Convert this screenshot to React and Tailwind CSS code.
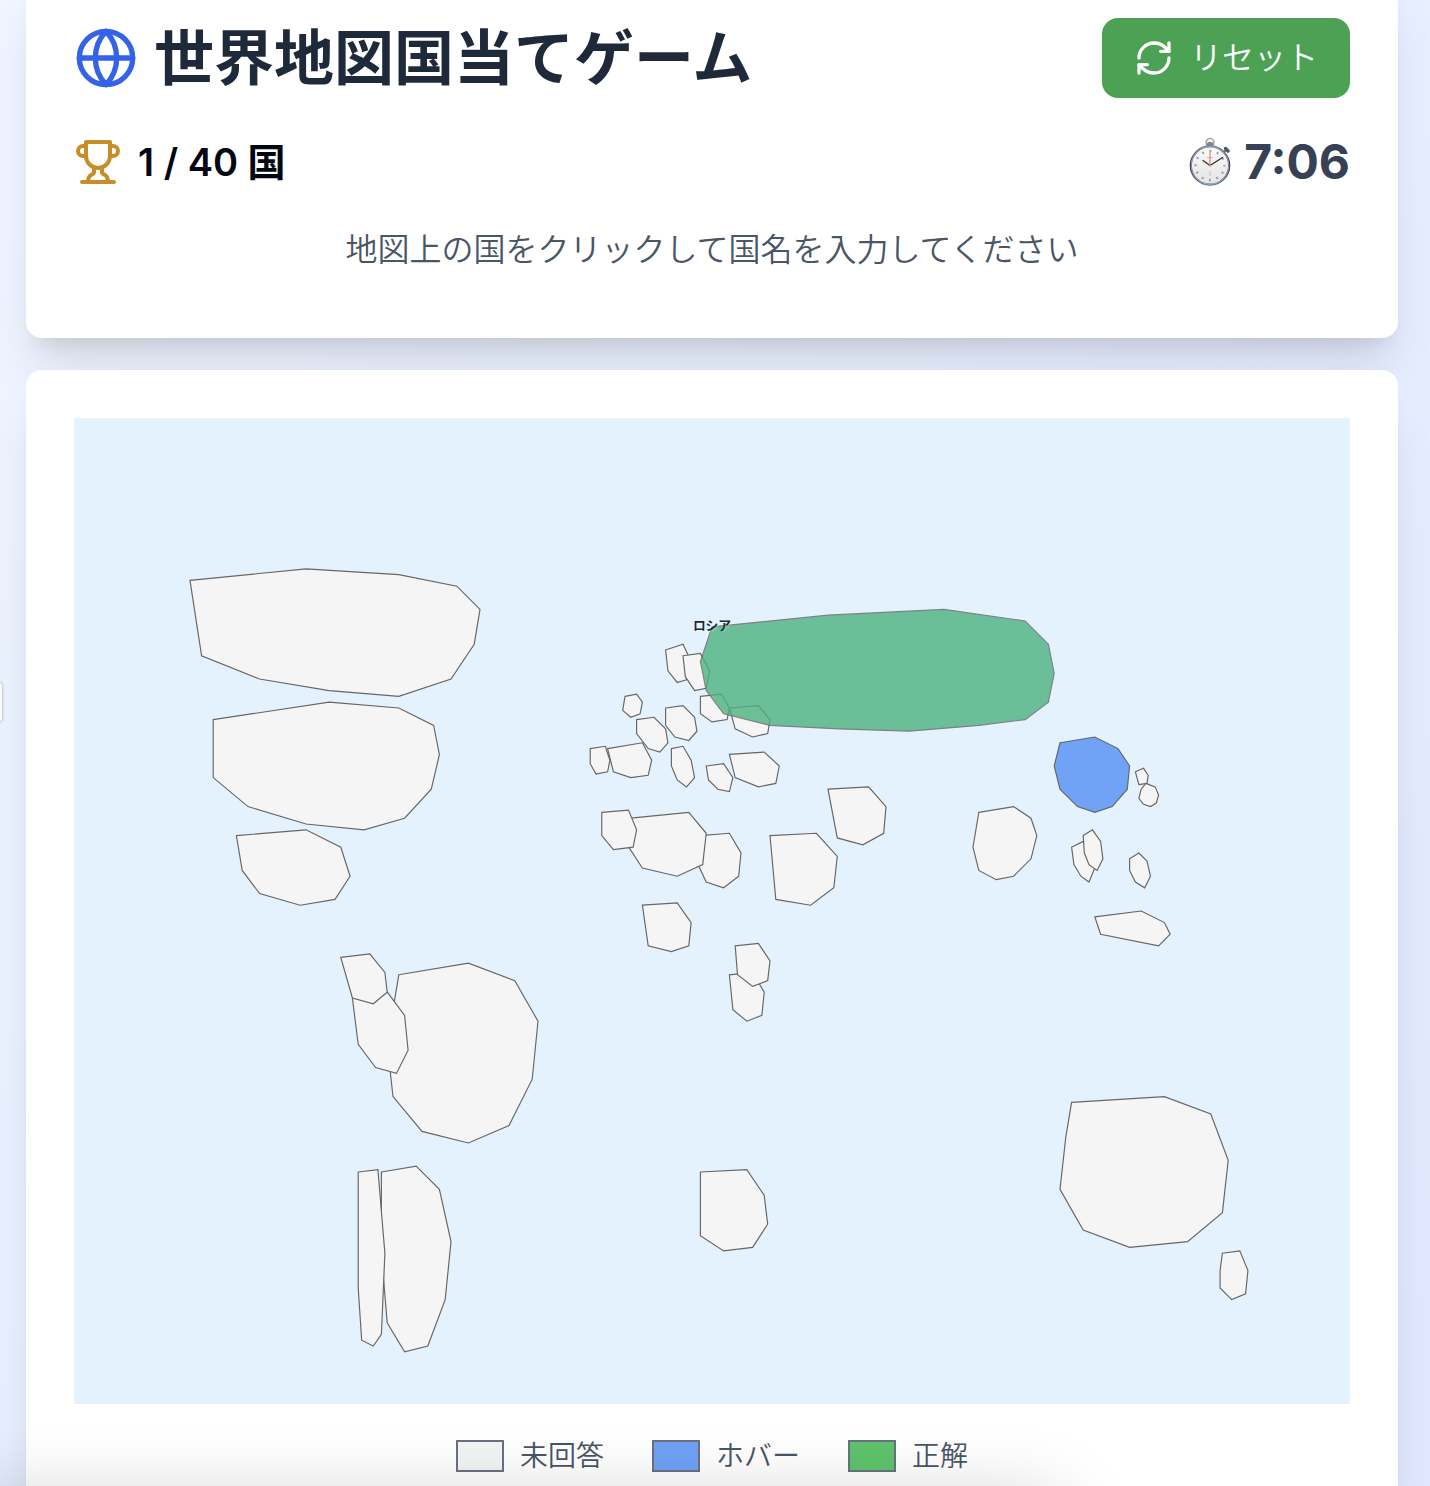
import React, { useState } from "react";
import { Globe, RefreshCw } from "lucide-react";

// Later entries are drawn over earlier ones
const COUNTRIES = [
  { id: "CA", name: "カナダ", points: "100,140 200,130 280,135 330,145 350,165 345,195 325,225 280,240 220,235 160,225 110,205" },
  { id: "US", name: "アメリカ", points: "120,260 220,245 280,250 310,265 315,290 308,320 285,345 250,355 200,350 150,335 120,310" },
  { id: "MX", name: "メキシコ", points: "140,360 200,355 230,370 238,395 225,415 195,420 160,410 145,390" },
  { id: "BR", name: "ブラジル", points: "280,480 340,470 380,485 400,520 395,570 375,610 340,625 300,615 275,585 270,540" },
  { id: "AR", name: "アルゼンチン", points: "265,650 295,645 315,665 325,710 320,760 305,800 285,805 270,780 265,720" },
  { id: "CL", name: "チリ", points: "245,650 262,648 268,720 265,790 258,800 248,795 245,750" },
  { id: "PE", name: "ペルー", points: "240,500 265,488 285,515 288,545 278,565 260,560 245,540" },
  { id: "CO", name: "コロンビア", points: "230,465 255,462 268,478 270,495 258,505 240,500" },
  { id: "GB", name: "イギリス", points: "475,240 485,238 490,245 488,255 480,258 473,252" },
  { id: "FR", name: "フランス", points: "485,260 500,258 510,268 512,280 505,288 495,285 485,272" },
  { id: "DE", name: "ドイツ", points: "510,250 525,248 535,258 537,270 530,278 518,275 510,265" },
  { id: "ES", name: "スペイン", points: "460,285 490,280 498,295 495,308 480,310 465,305" },
  { id: "PT", name: "ポルトガル", points: "445,285 458,283 462,295 460,305 450,307 445,298" },
  { id: "IT", name: "イタリア", points: "515,285 525,283 532,295 535,310 528,318 520,312 515,300" },
  { id: "GR", name: "ギリシャ", points: "545,300 560,298 568,310 565,322 555,320 547,312" },
  { id: "TR", name: "トルコ", points: "565,290 595,288 608,300 605,315 590,318 570,310" },
  { id: "PL", name: "ポーランド", points: "540,240 558,238 565,250 563,260 550,262 540,255" },
  { id: "UA", name: "ウクライナ", points: "565,250 590,248 600,260 598,272 585,275 570,268" },
  { id: "NO", name: "ノルウェー", points: "510,200 525,195 532,210 530,225 520,228 512,218" },
  { id: "SE", name: "スウェーデン", points: "525,205 540,203 548,218 545,233 535,235 527,223" },
  { id: "RU", name: "ロシア", label: [550, 183], points: "550,180 650,170 750,165 820,175 840,195 845,220 840,245 820,260 780,265 720,270 660,268 600,265 560,255 545,235 540,210" },
  { id: "EG", name: "エジプト", points: "540,360 565,358 575,375 573,395 560,405 545,400 538,385" },
  { id: "DZ", name: "アルジェリア", points: "480,345 530,340 545,358 542,385 520,395 490,388 475,365" },
  { id: "MA", name: "モロッコ", points: "455,340 478,338 485,355 482,370 465,372 455,360" },
  { id: "NG", name: "ナイジェリア", points: "490,420 520,418 532,435 530,455 515,460 495,455" },
  { id: "TZ", name: "タンザニア", points: "565,480 585,478 595,495 593,515 580,520 568,510" },
  { id: "KE", name: "ケニア", points: "570,455 590,453 600,468 598,485 585,490 572,480" },
  { id: "ZA", name: "南アフリカ", points: "540,650 580,648 595,670 598,695 585,715 560,718 540,705" },
  { id: "SA", name: "サウジアラビア", points: "600,360 640,358 658,378 655,405 635,420 605,415" },
  { id: "IR", name: "イラン", points: "650,320 685,318 700,335 698,358 680,368 658,362" },
  { id: "IN", name: "インド", points: "780,340 810,335 825,345 830,360 825,380 810,395 795,398 780,390 775,370" },
  { id: "CN", name: "中国", points: "850,280 880,275 900,285 910,300 908,320 895,335 880,340 865,335 850,320 845,300" },
  { id: "KR", name: "韓国", points: "915,305 922,302 926,308 925,315 918,316" },
  { id: "JP", name: "日本", points: "924,315 932,318 935,325 933,332 928,335 922,333 918,328 920,320" },
  { id: "TH", name: "タイ", points: "860,370 870,365 880,388 875,400 868,395 862,385" },
  { id: "VN", name: "ベトナム", points: "870,360 878,355 885,365 887,380 882,390 875,385 871,375" },
  { id: "PH", name: "フィリピン", points: "910,380 918,375 925,382 928,395 923,405 915,400 910,390" },
  { id: "ID", name: "インドネシア", points: "880,430 920,425 940,435 945,445 935,455 885,445" },
  { id: "AU", name: "オーストラリア", points: "860,590 940,585 980,600 995,640 990,685 960,710 910,715 870,700 850,665 855,620" },
  { id: "NZ", name: "ニュージーランド", points: "990,720 1005,718 1012,735 1010,755 998,760 988,750 988,735" },
];

const LEGEND = [
  { label: "未回答", color: "bg-[#f3f4f6]" },
  { label: "ホバー", color: "bg-[#70a2f5]" },
  { label: "正解", color: "bg-[#5fc46b]" },
];

const TrophyIcon = () => (
  <svg
    viewBox="0 0 24 24"
    className="size-12 text-[#c68e28]"
    fill="none"
    stroke="currentColor"
    strokeWidth="2"
    strokeLinecap="round"
    strokeLinejoin="round"
    aria-hidden="true"
  >
    <path d="M6 9H4.5a2.5 2.5 0 0 1 0-5H6" />
    <path d="M18 9h1.5a2.5 2.5 0 0 0 0-5H18" />
    <path d="M4 22h16" />
    <path d="M10 14.66V17c0 .55-.47.98-.97 1.21C7.85 18.75 7 20.24 7 22" />
    <path d="M14 14.66V17c0 .55.47.98.97 1.21C16.15 18.75 17 20.24 17 22" />
    <path d="M18 2H6v7a6 6 0 0 0 12 0V2Z" />
  </svg>
);

const StopwatchIcon = () => (
  <svg viewBox="0 0 44 50" className="h-[50px] w-11" aria-hidden="true">
    <defs>
      <linearGradient id="rim" x1="0" y1="0" x2="0" y2="1">
        <stop offset="0" stopColor="#6f7c8d" />
        <stop offset="0.5" stopColor="#34383f" />
        <stop offset="1" stopColor="#67758a" />
      </linearGradient>
      <linearGradient id="face" x1="0" y1="0" x2="0" y2="1">
        <stop offset="0" stopColor="#fafafa" />
        <stop offset="1" stopColor="#e4e4e4" />
      </linearGradient>
    </defs>
    <circle cx="22" cy="5.500" r="4" fill="#f3f3f3" stroke="#8d9095" strokeWidth="1.200" />
    <rect x="19" y="5" width="6" height="5" rx="1.500" fill="#7d8794" />
    <path d="M35 16l3-3" stroke="#6b7280" strokeWidth="2" />
    <path d="M37.500 11.500l2.500 2.500" stroke="#4f5763" strokeWidth="3.500" strokeLinecap="round" />
    <circle cx="22" cy="28.500" r="19.200" fill="url(#face)" stroke="url(#rim)" strokeWidth="2.200" />
    <circle cx="22" cy="28.500" r="18.800" fill="none" stroke="#b9c6d8" strokeWidth="0.700" />
    <circle cx="22" cy="28.500" r="14.500" fill="none" stroke="#a3a3a3" strokeWidth="2.400" strokeDasharray="2 5.590" strokeDashoffset="1" />
    <path d="M19 20.500h6M22 34v5" stroke="#c4c4c4" strokeWidth="1" />
    <path d="M22 29V14.500" stroke="#e2896c" strokeWidth="1.200" />
    <path d="M22 28.500l12.500-8M22 28.500l-7-5" stroke="#2c2c2c" strokeWidth="1.200" strokeLinecap="round" />
    <circle cx="22" cy="28.500" r="1.200" fill="#e2896c" />
  </svg>
);

const App = () => {
  const [answered, setAnswered] = useState(["RU"]);
  const [hovered, setHovered] = useState("CN");
  const [seconds, setSeconds] = useState(426);

  const handleReset = () => {
    setAnswered([]);
    setHovered(null);
    setSeconds(0);
  };

  const formatTime = (s) =>
    `${Math.floor(s / 60)}:${String(s % 60).padStart(2, "0")}`;

  const countryClass = (id) => {
    if (answered.includes(id)) return "fill-[#4db27f] opacity-80";
    if (hovered === id) return "fill-[#70a2f5]";
    return "fill-[#f5f5f5]";
  };

  return (
    <div
      lang="ja"
      className="flex min-h-screen flex-col gap-8 overflow-hidden bg-linear-to-br from-blue-50 to-indigo-100 pl-[26px] pr-8 font-['Inter','Noto_Sans_CJK_JP',sans-serif]"
    >
      {/* Header */}
      <header className="-mt-8 rounded-2xl bg-white px-12 pb-16 pt-[50px] shadow-[0_40px_50px_-10px_rgba(0,0,0,0.1),0_16px_20px_-12px_rgba(0,0,0,0.1)]">
        <div className="flex items-center justify-between">
          <h1 className="flex items-center gap-4 text-[60px] leading-[80px] font-bold text-gray-800">
            <Globe className="size-16 text-[#3563e8]" />
            世界地図国当てゲーム
          </h1>
          <button
            type="button"
            onClick={handleReset}
            className="flex items-center gap-4 rounded-2xl bg-[#4ca154] px-8 py-4 text-[32px] leading-[48px] font-[350] text-white"
          >
            <RefreshCw className="size-10" />
            リセット
          </button>
        </div>

        <div className="mt-8 flex items-center justify-between">
          <div className="flex items-center gap-4">
            <TrophyIcon />
            <span className="text-[38px] leading-[64px] font-semibold text-gray-950">
              {answered.length} / {COUNTRIES.length} 国
            </span>
          </div>
          <div className="flex items-center gap-3 text-[48px] leading-[64px] font-bold text-gray-700">
            <StopwatchIcon />
            {formatTime(seconds)}
          </div>
        </div>

        <p className="mt-8 text-center text-[32px] leading-[48px] font-[350] text-gray-600">
          地図上の国をクリックして国名を入力してください
        </p>
      </header>

      {/* Map */}
      <main className="rounded-t-2xl bg-white px-12 pb-[10px] pt-12 shadow-[0_40px_50px_-10px_rgba(0,0,0,0.1),0_16px_20px_-12px_rgba(0,0,0,0.1)]">
        <svg viewBox="0 0 1100 850" className="block h-auto w-full bg-[#e3f2fd]">
          {COUNTRIES.map((c) => (
            <polygon
              key={c.id}
              points={c.points}
              aria-label={c.name}
              className={`cursor-pointer stroke-[#666] stroke-1 ${countryClass(c.id)}`}
              onMouseEnter={() => setHovered(c.id)}
            />
          ))}
          {COUNTRIES.filter((c) => c.label && answered.includes(c.id)).map((c) => (
            <text
              key={c.id}
              x={c.label[0]}
              y={c.label[1]}
              textAnchor="middle"
              className="pointer-events-none fill-gray-800 text-[11px] font-bold [text-shadow:1px_1px_2px_rgba(255,255,255,0.4)]"
            >
              {c.name}
            </text>
          ))}
        </svg>

        {/* Legend */}
        <ul className="mt-8 flex justify-center gap-12 text-[28px] leading-[40px] font-[350] text-gray-600">
          {LEGEND.map((item) => (
            <li key={item.label} className="flex items-center gap-4">
              <span className={`h-8 w-12 border-2 border-gray-500 ${item.color}`} />
              {item.label}
            </li>
          ))}
        </ul>
      </main>

      {/* Side handle */}
      <div className="fixed -left-1.5 top-[682px] h-10 w-2 rounded-sm bg-[#fbfbf3] shadow-[0_0_3px_rgba(0,0,0,0.4)]" />

      <div className="pointer-events-none fixed -left-10 top-full mt-4 h-40 w-[1100px] rounded-2xl shadow-[0_0_80px_rgba(0,0,0,0.2)]" />
    </div>
  );
};

export default App;
